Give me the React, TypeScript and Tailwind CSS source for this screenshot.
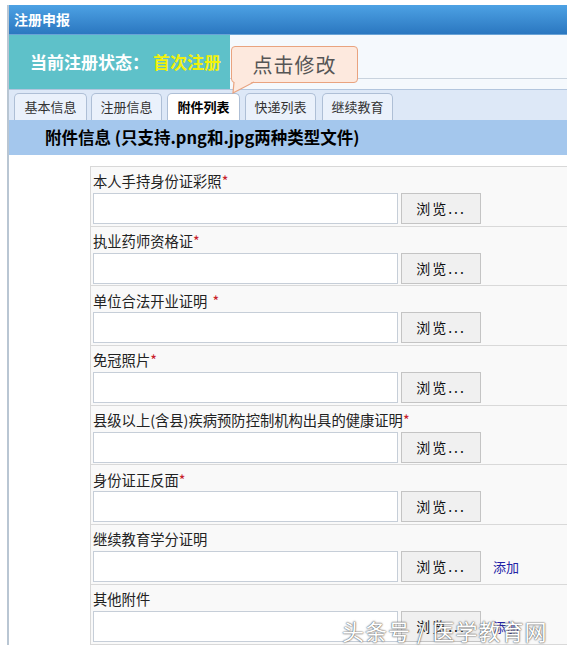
import React from "react";

interface AttachField {
  label: string;
  required?: boolean;
  requiredGap?: boolean;
  canAdd?: boolean;
}

const fields: AttachField[] = [
  { label: "本人手持身份证彩照", required: true },
  { label: "执业药师资格证", required: true },
  { label: "单位合法开业证明", required: true, requiredGap: true },
  { label: "免冠照片", required: true },
  { label: "县级以上(含县)疾病预防控制机构出具的健康证明", required: true },
  { label: "身份证正反面", required: true },
  { label: "继续教育学分证明", canAdd: true },
  { label: "其他附件", canAdd: true },
];

const tabs = [
  { name: "基本信息", w: "w-[73px]" },
  { name: "注册信息", w: "w-[71px]" },
  { name: "附件列表", w: "w-[73px]", active: true },
  { name: "快递列表", w: "w-[71px]" },
  { name: "继续教育", w: "w-[71px]" },
];

const App = () => {
  return (
    <div className="relative w-[575px] h-[650px] overflow-hidden bg-white font-['Noto_Sans_CJK_SC',sans-serif] text-[#222]">
      <div className="ml-[7px] mt-[5px] w-[560px] border-l-2 border-[#b9c6d3]">
        {/* title bar */}
        <div className="h-[30px] flex items-center pl-[5px] bg-gradient-to-b from-[#4da2e4] to-[#2b77c0] border-b border-[#6aa3d6] text-white text-[14px] font-bold">
          注册申报
        </div>

        {/* status */}
        <div className="flex h-[54px]">
          <div className="w-[221px] bg-[#5ec1c9] flex items-center pl-[21px] text-[17px] font-bold text-white">
            当前注册状态：
            <span className="ml-[4px] text-[#f2f20a]">首次注册</span>
          </div>
          <div className="flex-1 bg-[#f5f9fd] flex flex-col">
            <div className="h-[43px]" />
            <div className="border-t border-[#c9d3de]" />
          </div>
        </div>

        {/* tabs */}
        <div className="h-[31px] bg-[#dde8f7] border-t border-[#b3c6de] flex items-end pl-[5px]">
          {tabs.map((t, i) => (
            <div
              key={t.name}
              className={
                (t.active
                  ? "bg-white font-bold text-black "
                  : "bg-[#eaf1fb] text-[#333] ") +
                t.w +
                (i === 0 ? "" : i === 4 ? " ml-[6px]" : i === 1 ? " ml-[4px]" : " ml-[5px]") +
                " h-[27px] flex items-center justify-center text-[13px] border border-b-0 border-[#aebfd6] rounded-t-[5px]"
              }
            >
              {t.name}
            </div>
          ))}
        </div>

        {/* section header */}
        <div className="h-[35px] bg-[#a4c7ed] flex items-center pl-[36px] text-[16.5px] font-bold text-black">
          附件信息 (只支持.png和.jpg两种类型文件)
        </div>
        <div className="h-[11px] bg-white" />

        {/* form */}
        <div className="flex">
          <div className="w-[81px] bg-white" />
          <div className="flex-1 border-l border-[#cdd4dc] border-t border-[#d8d8d8]">
            {fields.map((f) => (
              <div
                key={f.label}
                className="h-[59.7px] bg-[#f9f9f9] border-b border-[#d9d9d9] pl-[2px] flex flex-col"
              >
                <div className="h-[26px] flex items-center pt-[2px] text-[14.3px] text-[#222]">
                  {f.label}
                  {f.required && (
                    <span className={"text-[#c8202a] " + (f.requiredGap ? "ml-[5px]" : "")}>*</span>
                  )}
                </div>
                <div className="flex items-center">
                  <div className="w-[305px] h-[31px] bg-white border border-[#c6ced8]" />
                  <button className="ml-[3px] w-[80px] h-[31px] bg-[#f0f0f0] border border-[#c4c4c4] text-[14px] text-[#111] tracking-[2px]">
                    浏览...
                  </button>
                  {f.canAdd && (
                    <span className="ml-[12px] text-[13px] text-[#2323a6]">添加</span>
                  )}
                </div>
              </div>
            ))}
          </div>
        </div>
      </div>

      {/* tooltip */}
      <div className="absolute left-[231px] top-[46px] w-[127px] h-[37px] rounded-[4px] border border-[#e9a37f] bg-[#fde9de] flex items-center justify-center text-[20px] text-[#555] tracking-[1px]">
        点击修改
      </div>
      <svg className="absolute left-[230px] top-[81px]" width="30" height="14" viewBox="0 0 30 14">
        <path d="M4 0 L3 12 L24 0 Z" fill="#fde9de" />
        <path d="M4 1 L3 12 L24 1" fill="none" stroke="#e9a37f" strokeWidth="1.2" />
      </svg>

      {/* watermark */}
      <div className="absolute left-[342px] top-[614px] text-[22px] text-white tracking-[1px] [text-shadow:0_0_2px_#555,0_0_1px_#555]">
        头条号 / 医学教育网
      </div>
    </div>
  );
};

export default App;
